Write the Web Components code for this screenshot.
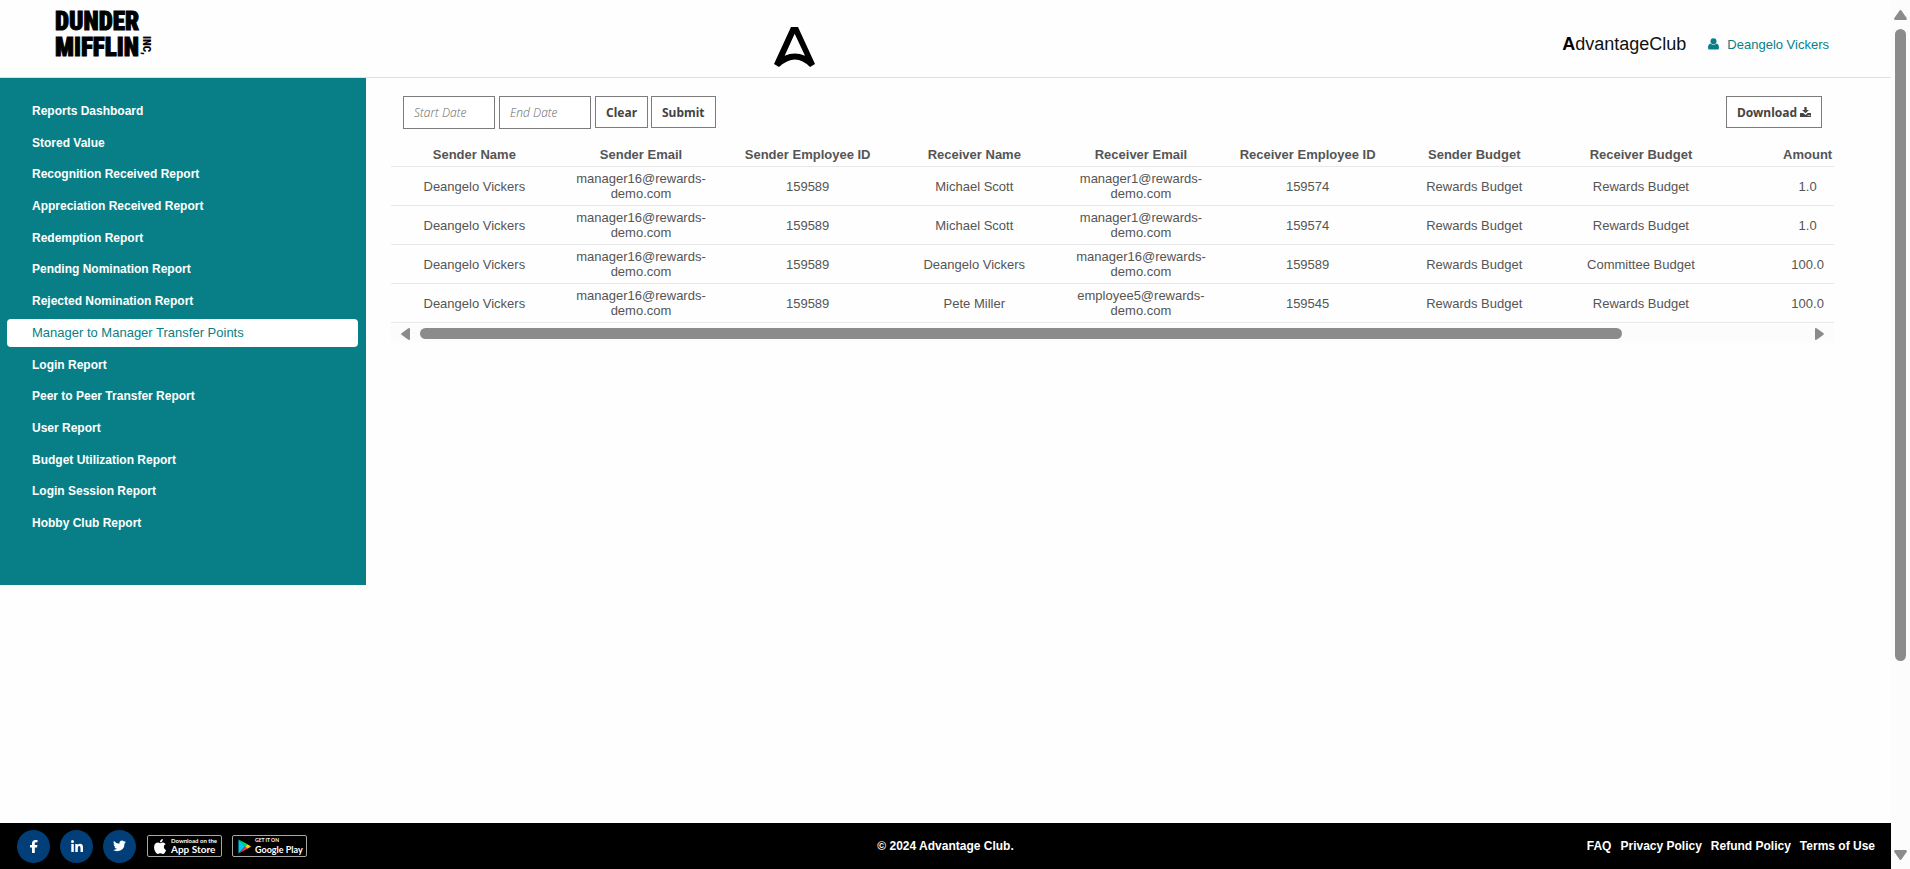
<!DOCTYPE html>
<html lang="en">
<head>
<meta charset="utf-8">
<title>Manager to Manager Transfer Points</title>
<style>
  html, body { margin: 0; }
  body {
    background: #fefefe;
    font-family: "Liberation Sans", Arial, sans-serif;
    font-size: 13px;
    color: #555;
    --brand: #087f87;
  }
</style>
</head>
<body>
<app-shell>
  <site-header slot="header" user="Deangelo Vickers"></site-header>
  <report-nav slot="nav"></report-nav>
  <report-filters slot="main"></report-filters>
  <transfer-table slot="main"></transfer-table>
  <site-footer slot="footer"></site-footer>
</app-shell>

<script>
function define(name, html, setup) {
  const template = document.createElement('template');
  template.innerHTML = html;
  customElements.define(name, class extends HTMLElement {
    constructor() {
      super();
      this.attachShadow({ mode: 'open' }).append(template.content.cloneNode(true));
    }
    connectedCallback() {
      if (setup) setup(this.shadowRoot, this);
    }
  });
}

/* Page frame: header, side column, main column, footer and the page scroll bar */
define('app-shell', `
  <style>
    :host { display: grid; grid-template-columns: minmax(0, 1fr) 19px; height: 100vh; }
    .page { display: flex; flex-direction: column; min-height: 0; overflow: hidden; }
    .body { flex: 1; min-height: 0; display: flex; align-items: flex-start; }
    main { flex: 1; min-width: 0; padding: 18px 57px 0 25px; }
  </style>
  <div class="page">
    <slot name="header"></slot>
    <div class="body">
      <slot name="nav"></slot>
      <main><slot name="main"></slot></main>
    </div>
    <slot name="footer"></slot>
  </div>
  <scroll-rail direction="vertical"></scroll-rail>
`);

define('scroll-rail', `
  <style>
    :host { display: flex; align-items: center; background: #fcfcfc; }
    :host([direction=vertical]) { flex-direction: column; padding: 10px 0 9px; box-sizing: border-box; }
    :host([direction=horizontal]) { height: 19px; padding: 0 10px; }
    svg { display: block; fill: #8b8b8b; flex: none; }
    .track { flex: 1; display: flex; }
    .thumb { background: #8b8b8b; border-radius: 6px; }
    :host([direction=vertical]) .track { padding: 9px 0 8px; flex-direction: column; }
    :host([direction=vertical]) .thumb { width: 11px; flex: 7; }
    :host([direction=vertical]) .rest { flex: 2; }
    :host([direction=horizontal]) .track { padding: 0 8px 0 10px; }
    :host([direction=horizontal]) .thumb { height: 11px; flex: 13; }
    :host([direction=horizontal]) .rest { flex: 2; }
  </style>
  <svg class="back"></svg>
  <div class="track"><div class="thumb"></div><div class="rest"></div></div>
  <svg class="forward"></svg>
`, (root, host) => {
  const vertical = host.getAttribute('direction') === 'vertical';
  const draw = (sel, w, h, d) => {
    const svg = root.querySelector(sel);
    svg.setAttribute('width', w);
    svg.setAttribute('height', h);
    svg.setAttribute('viewBox', `0 0 ${w} ${h}`);
    svg.innerHTML = `<path d="${d}"/>`;
  };
  if (vertical) {
    draw('.back', 13, 10, 'M5.4.8Q6.5-.6 7.6.8L12.6 8Q13.4 10 11.6 10H1.4Q-.4 10 .4 8Z');
    draw('.forward', 13, 10, 'M5.4 9.2Q6.5 10.6 7.6 9.2L12.6 2Q13.4 0 11.6 0H1.4Q-.4 0 .4 2Z');
  } else {
    draw('.back', 9, 12, 'M.8 5Q-.6 6 .8 7L7 11.6Q9 12.6 9 11V1Q9-.6 7 .4Z');
    draw('.forward', 9, 12, 'M8.2 5Q9.6 6 8.2 7L2 11.6Q0 12.6 0 11V1Q0-.6 2 .4Z');
  }
});

define('dunder-logo', `
  <style>
    :host { display: flex; align-items: flex-start; color: #000; font-family: "Roboto Condensed", Roboto, sans-serif; font-weight: 900; }
    .name { display: grid; font-size: 25px; line-height: 26px; -webkit-text-stroke: 1px #000; }
    .name span { display: block; height: 26px; }
    .inc { writing-mode: vertical-rl; font-size: 11px; line-height: 12px; margin: 27px 0 0 1px; }
  </style>
  <div class="name"><span>DUNDER</span><span>MIFFLIN</span></div>
  <span class="inc">INC,</span>
`);

define('site-header', `
  <style>
    :host { display: grid; grid-template-columns: 1fr auto 1fr; height: 77px; border-bottom: 1px solid #e0e0e0; }
    dunder-logo { padding: 9px 0 0 55px; }
    .mark { display: block; margin: 27px 302px 0 0; }
    .right { display: flex; justify-content: flex-end; align-items: center; padding: 0 62px 0 0; height: 88px; }
    .club { font-size: 18px; line-height: 22px; color: #111; margin-right: 22px; }
    .club b { color: #000; }
    a { display: flex; align-items: center; gap: 8px; color: var(--brand); text-decoration: none; }
    a svg { fill: currentColor; }
  </style>
  <dunder-logo></dunder-logo>
  <svg class="mark" width="41" height="40" viewBox="0 0 123 120" aria-label="Advantage Club">
    <path fill-rule="evenodd" d="M51 0H72L123 111L108 120Q64 75 15 120L0 111ZM62 20L32 86Q62 73 93 86Z"/>
  </svg>
  <div class="right">
    <span class="club"><b>A</b>dvantageClub</span>
    <a href="#profile">
      <svg width="11" height="12" viewBox="0 0 22 24"><circle cx="11" cy="6.500" r="6"/><path d="M5 11Q11 16 17 11Q22 12 22 20Q22 23 19 23H3Q0 23 0 20Q0 12 5 11Z"/></svg>
      <span class="user"></span>
    </a>
  </div>
`, (root, host) => { root.querySelector('.user').textContent = host.getAttribute('user'); });

define('report-nav', `
  <style>
    :host { display: block; flex: none; width: 366px; box-sizing: border-box; background: var(--brand); }
    ul { list-style: none; margin: 0; padding: 19px 8px 48px 7px; min-height: 507px; box-sizing: border-box; display: flex; flex-direction: column; justify-content: space-between; }
    a { display: block; padding: 0 25px; line-height: 28px; color: #fff; font-size: 12px; font-weight: 700; text-decoration: none; border-radius: 4px; }
    a[aria-current] { background: #fff; color: var(--brand); font-size: 13px; font-weight: 400; }
  </style>
  <nav aria-label="Reports"><ul></ul></nav>
`, root => {
  const items = ['Reports Dashboard', 'Stored Value', 'Recognition Received Report', 'Appreciation Received Report',
    'Redemption Report', 'Pending Nomination Report', 'Rejected Nomination Report', 'Manager to Manager Transfer Points',
    'Login Report', 'Peer to Peer Transfer Report', 'User Report', 'Budget Utilization Report',
    'Login Session Report', 'Hobby Club Report'];
  root.querySelector('ul').innerHTML = items.map((t, i) =>
    `<li><a href="#report-${i}"${i === 7 ? ' aria-current="page"' : ''}>${t}</a></li>`).join('');
});

define('report-filters', `
  <style>
    :host { display: block; padding: 0 12px; }
    form { display: flex; align-items: flex-start; }
    input, button { box-sizing: border-box; flex: none; border: 1px solid #7c7c7c; background: #fff; margin: 0; border-radius: 0; font-family: "Noto Sans", sans-serif; font-size: 12px; }
    input { width: 92px; height: 33px; padding: 0 10px; margin-right: 4px; font-family: "Open Sans", sans-serif; font-style: italic; font-weight: 300; }
    input::placeholder { color: #666; opacity: 1; }
    button { height: 32px; padding: 0 10px; font-weight: 700; color: #444; display: flex; align-items: center; gap: 3px; margin-right: 3px; }
    .download { margin: 0 0 0 auto; }
    svg { fill: currentColor; }
  </style>
  <form>
    <input type="text" placeholder="Start Date" aria-label="Start Date">
    <input type="text" placeholder="End Date" aria-label="End Date">
    <button type="reset">Clear</button>
    <button type="button">Submit</button>
    <button type="button" class="download">Download
      <svg width="11" height="10" viewBox="0 0 33 30"><path fill-rule="evenodd" d="M13 0H20V9H27L16.500 19L6 9H13ZM0 18H10L16.500 24L23 18H33V30H0ZM23 24V27H26V24ZM28 24V27H31V24Z"/></svg>
    </button>
  </form>
`);

define('transfer-table', `
  <style>
    :host { display: block; overflow: hidden; padding-top: 16px; }
    .view { overflow: hidden; padding-bottom: 1px; }
    table { border-collapse: collapse; table-layout: fixed; width: 1500px; font-size: 13px; line-height: 15px; text-align: center; }
    th { padding: 2px 0 4px; font-weight: 700; }
    td { padding: 4px 16px; height: 30px; }
    tr { border-bottom: 1px solid #e7e7e7; }
  </style>
  <div class="view">
    <table><thead><tr></tr></thead><tbody></tbody></table>
  </div>
  <scroll-rail direction="horizontal"></scroll-rail>
`, root => {
  const heads = ['Sender Name', 'Sender Email', 'Sender Employee ID', 'Receiver Name', 'Receiver Email',
    'Receiver Employee ID', 'Sender Budget', 'Receiver Budget', 'Amount'];
  const sender = ['Deangelo Vickers', 'manager16@rewards-demo.com', '159589'];
  const rows = [
    [...sender, 'Michael Scott', 'manager1@rewards-demo.com', '159574', 'Rewards Budget', 'Rewards Budget', '1.0'],
    [...sender, 'Michael Scott', 'manager1@rewards-demo.com', '159574', 'Rewards Budget', 'Rewards Budget', '1.0'],
    [...sender, 'Deangelo Vickers', 'manager16@rewards-demo.com', '159589', 'Rewards Budget', 'Committee Budget', '100.0'],
    [...sender, 'Pete Miller', 'employee5@rewards-demo.com', '159545', 'Rewards Budget', 'Rewards Budget', '100.0']
  ];
  root.querySelector('thead tr').innerHTML = heads.map(h => `<th scope="col">${h}</th>`).join('');
  root.querySelector('tbody').innerHTML = rows.map(r => `<tr>${r.map(c => `<td>${c}</td>`).join('')}</tr>`).join('');
});

define('store-badge', `
  <style>
    :host { display: block; margin-left: 1px; }
    a { box-sizing: border-box; display: flex; align-items: center; gap: 4px; width: 75px; height: 22px; padding: 0 0 0 5px; border: 1px solid #a6a6a6; border-radius: 2px; background: #000; color: #fff; text-decoration: none; font-family: Lato, sans-serif; }
    .text { display: grid; white-space: nowrap; }
    small { font-size: var(--lead-size, 6px); line-height: 7px; }
    .store { font-size: var(--store-size, 10px); line-height: 11px; }
    svg, ::slotted(svg) { flex: none; }
  </style>
  <a><slot></slot><span class="text"><small></small><span class="store"></span></span></a>
`, (root, host) => {
  root.querySelector('a').href = '#' + host.id;
  root.querySelector('small').textContent = host.getAttribute('lead');
  root.querySelector('.store').textContent = host.getAttribute('store');
});

define('site-footer', `
  <style>
    :host { display: grid; grid-template-columns: 1fr auto 1fr; align-items: center; height: 46px; background: #000; color: #fff; font-size: 12px; font-weight: 700; }
    a { color: inherit; text-decoration: none; }
    .left { display: flex; align-items: center; gap: 10px; padding-left: 17px; }
    .social { display: flex; align-items: center; justify-content: center; width: 33px; height: 33px; border-radius: 50%; background: #023e78; }
    .social svg { fill: #fff; }
    #google-play { margin-left: 0; --lead-size: 5px; --store-size: 9px; }
    .right { display: flex; justify-content: flex-end; gap: 9px; padding-right: 16px; }
  </style>
  <div class="left">
    <a class="social" href="#facebook" aria-label="Facebook"><svg width="8" height="13" viewBox="0 0 8 13"><path d="M2 13V7.500H0V5H2V3.500Q2 0 5.500 0H7.500V2.300H6Q4.800 2.300 4.800 3.500V5H7.400L7 7.500H4.800V13Z"/></svg></a>
    <a class="social" href="#linkedin" aria-label="LinkedIn"><svg width="12" height="12" viewBox="0 0 12 12"><circle cx="1.500" cy="1.500" r="1.500"/><path d="M.3 4H2.800V12H.3ZM4.300 4H6.700V5.100Q7.400 3.800 9.100 3.800Q12 3.800 12 7.400V12H9.500V8Q9.500 6 8.200 6Q6.800 6 6.800 8V12H4.300Z"/></svg></a>
    <a class="social" href="#twitter" aria-label="Twitter"><svg width="13" height="12" viewBox="0 0 24 20"><path d="M24 2.400Q22.600 3 21.200 3.200Q22.700 2.200 23.300.5Q21.900 1.300 20.200 1.700Q18.600 0 16.600 0Q11.800.3 11.700 5.900Q5.500 5.700 1.700.9Q-.4 5 3.200 7.500Q2 7.400 1 6.900Q1 10.600 4.900 11.800Q3.800 12 2.700 11.900Q3.800 15 7.300 15.300Q4.200 17.700 0 17.400Q3.400 19.500 7.500 19.500Q21 19 21.500 5Q23 4 24 2.400Z"/></svg></a>
    <store-badge id="app-store" lead="Download on the" store="App Store">
      <svg width="14" height="15" viewBox="0 0 24 26"><path fill="#fff" d="M17 0Q17.200 2.600 15.500 4.300Q14 6 12 5.800Q11.900 3.500 13.400 1.900Q15 .2 17 0ZM12.500 7.400Q14.600 6 17 6.100Q20 6.300 21.700 8.600Q18.500 10.600 18.600 14Q18.800 17.800 22.500 19.300Q20.500 25.500 17 25.800Q15.500 25.800 14.500 25.200Q12.500 24.400 10.500 25.200Q9.300 25.900 8 25.800Q4.500 25 2.400 19Q.8 13.500 2.700 9.700Q4.500 6.300 8.300 6.200Q10.300 6.500 12.500 7.400Z"/></svg>
    </store-badge>
    <store-badge id="google-play" lead="GET IT ON" store="Google Play">
      <svg width="13" height="15" viewBox="0 0 26 30"><path fill="#00c8f0" d="M1 1V29L14 15Z"/><path fill="#00e070" d="M1 1L19 10.500L14 15Z"/><path fill="#f03a48" d="M1 29L19 19.500L14 15Z"/><path fill="#ffca10" d="M19 10.500L26 15L19 19.500L14 15Z"/></svg>
    </store-badge>
  </div>
  <span>© 2024 Advantage Club.</span>
  <div class="right">
    <a href="#faq">FAQ</a><a href="#privacy">Privacy Policy</a><a href="#refund">Refund Policy</a><a href="#terms">Terms of Use</a>
  </div>
`);
</script>
</body>
</html>
